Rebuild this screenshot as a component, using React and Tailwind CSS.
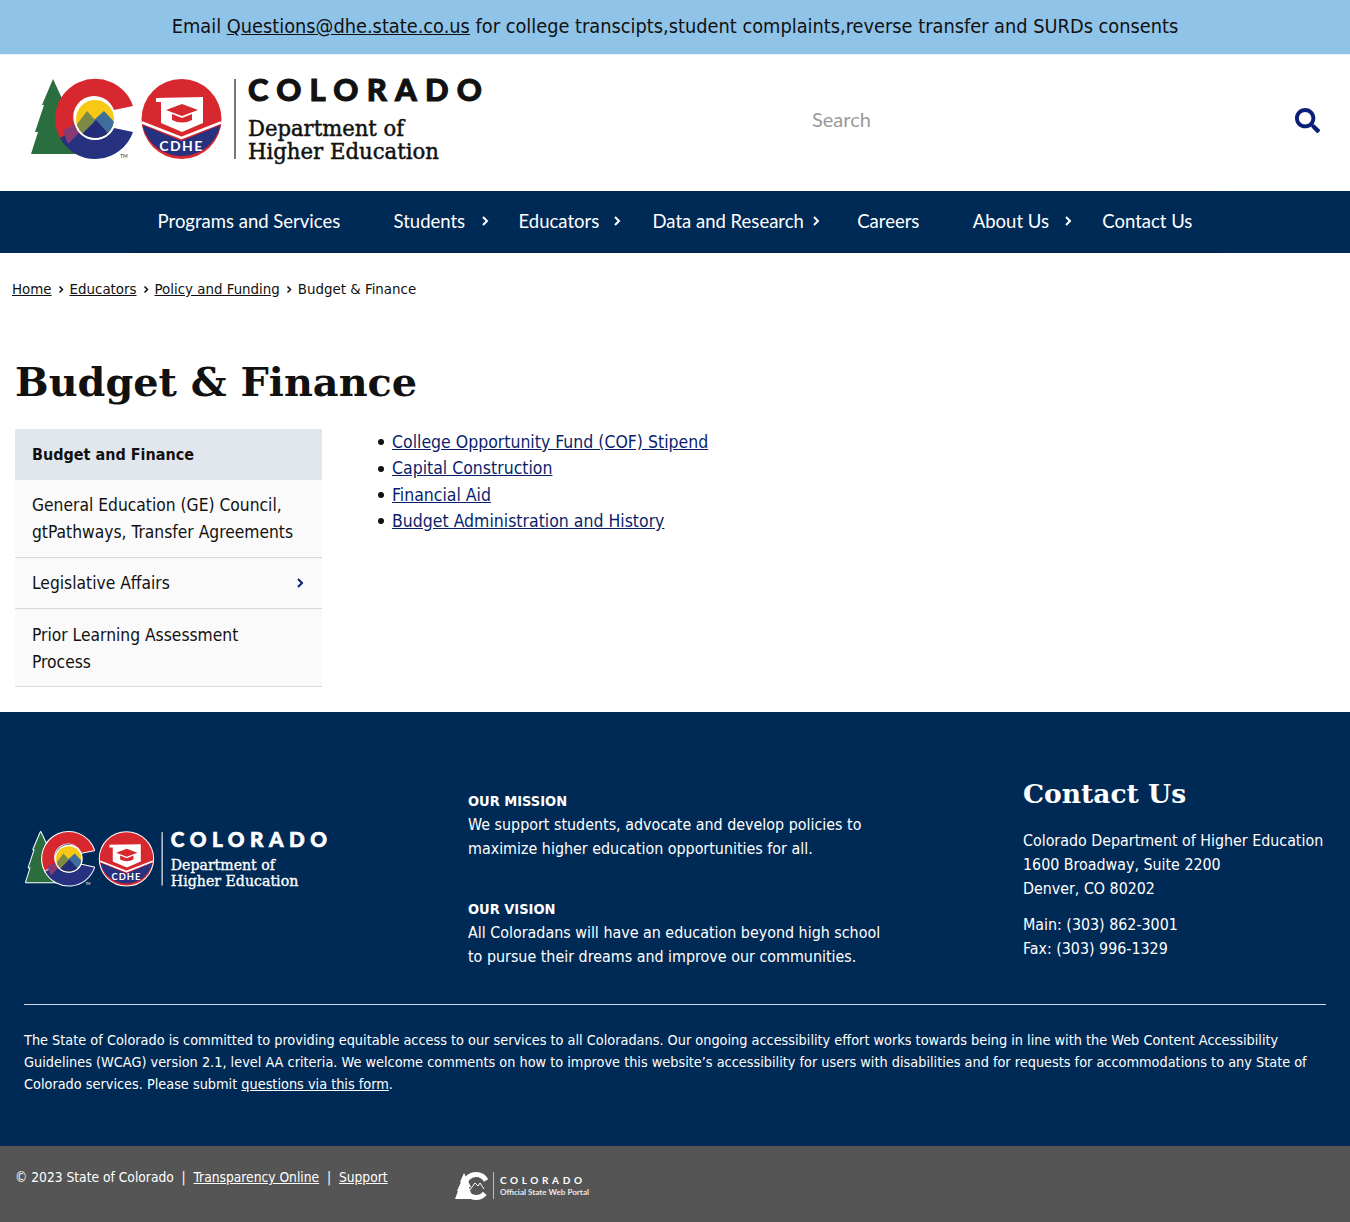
import { FaSearch } from "react-icons/fa";

const navItems = [
  { label: "Programs and Services" },
  { label: "Students", arrow: "right-[3px]" },
  { label: "Educators", arrow: "right-[5px]" },
  { label: "Data and Research", arrow: "right-[11px]" },
  { label: "Careers" },
  { label: "About Us", arrow: "right-[4px]" },
  { label: "Contact Us" },
];

const contentLinks = [
  "College Opportunity Fund (COF) Stipend",
  "Capital Construction",
  "Financial Aid",
  "Budget Administration and History",
];

const Chevron = ({ className }) => (
  <svg viewBox="0 0 8 12" className={className} fill="none" stroke="currentColor" strokeWidth="2">
    <path d="M2 2l4 4-4 4" />
  </svg>
);

// Department logo, drawn in header pixel coordinates
const CdheLogo = ({ dark = false, className }) => {
  const textColor = dark ? "#ffffff" : "#111111";
  const outline = dark ? { stroke: "#ffffff", strokeWidth: 3, strokeLinejoin: "round", paintOrder: "stroke" } : {};
  const clipId = dark ? "ring-dark" : "ring-light";
  return (
    <svg viewBox="28 76 460 88" className={`overflow-visible ${className}`}>
      <defs>
        <clipPath id={clipId}>
          <circle cx="95" cy="119" r="19" />
        </clipPath>
      </defs>
      {/* tree */}
      <polygon
        points="53,79 65,105 63,105 72,132 70,132 78,154 31,154 38,132 35,132 44,105 42,105"
        fill="#2a6e3f"
        {...outline}
      />
      {/* C */}
      <path d="M133 106 A40 40 0 1 0 60 138 L77 129 A21 21 0 1 1 114 110 Z" fill="#d7282f" {...outline} />
      <path d="M60 138 A40 40 0 0 0 133 132 L114 128 A21 21 0 0 1 77 129 Z" fill="#26317f" {...outline} />
      <polygon points="63,130 76,124 80,132 68,144" fill="#8a3a72" />
      <circle cx="95" cy="119" r="21" fill="#ffffff" />
      <g clipPath={`url(#${clipId})`}>
        <rect x="74" y="98" width="42" height="42" fill="#f7c916" />
        <polygon points="74,128 87,111 97,122 88,140 74,140" fill="#7d8a45" />
        <polygon points="94,120 104,111 118,126 110,138 96,138" fill="#3f6e9c" />
        <polygon points="76,140 96,120 114,140" fill="#232c78" />
      </g>
      <text x="120" y="158" fontSize="5" fill={dark ? "#ffffff" : "#333333"} fontFamily="Lato, sans-serif">TM</text>
      {/* CDHE seal */}
      <circle cx="181.5" cy="119" r="40" fill="#d7282f" {...outline} />
      <path d="M142.5 125 L181.5 141 L220.5 125 A40 40 0 0 1 142.5 125 Z" fill="#26317f" />
      <polyline points="142,122.5 181.5,138 221,122.5" fill="none" stroke="#ffffff" strokeWidth="2.5" />
      <polygon points="156,98 203,97 203,123 182,132 161,123 161,102 156,102" fill="#ffffff" />
      <polygon points="182,104 198,110 182,116 166,110" fill="#d7282f" />
      <path d="M172 114 L182 118 L192 114 L192 120 Q182 125 172 120 Z" fill="#d7282f" />
      <text x="181.5" y="151" textAnchor="middle" fontSize="14" fontWeight="700" letterSpacing="1.5" fill="#ffffff" fontFamily="Lato, sans-serif">CDHE</text>
      {/* divider */}
      <rect x="234" y="79" width="2" height="80" fill={dark ? "#d5dbe4" : "#777777"} />
      <text x="248" y="101" fontSize="31" fontWeight="900" stroke={textColor} strokeWidth="1" textLength="234" lengthAdjust="spacing" fill={textColor} fontFamily="Lato, sans-serif">COLORADO</text>
      <text x="248" y="136" fontSize="22" stroke={textColor} strokeWidth="0.5" textLength="156" lengthAdjust="spacingAndGlyphs" fill={textColor} fontFamily="'DejaVu Serif', serif">Department of</text>
      <text x="248" y="159" fontSize="22" stroke={textColor} strokeWidth="0.5" textLength="191" lengthAdjust="spacingAndGlyphs" fill={textColor} fontFamily="'DejaVu Serif', serif">Higher Education</text>
    </svg>
  );
};

// Small white state logo in the copyright bar
const StateLogo = () => (
  <svg viewBox="0 0 136 30" className="w-[136px] h-[30px] mt-[4px] -ml-[1px]">
    <polygon points="10,2 17,16 15,16 19,28 1,28 4,20 3,20 7,11 6,11" fill="#ffffff" />
    <circle cx="22" cy="15" r="11.5" fill="none" stroke="#ffffff" strokeWidth="5" strokeDasharray="58 14" strokeDashoffset="-8" />
    <path d="M15 20 L21 12 L24 15 L26 12 L30 18" fill="none" stroke="#ffffff" strokeWidth="1" />
    <rect x="39" y="1" width="1" height="27" fill="#bbbbbb" />
    <text x="46" y="13" fontSize="10" fontWeight="700" textLength="82" lengthAdjust="spacing" fill="#ffffff" fontFamily="Lato, sans-serif">COLORADO</text>
    <text x="46" y="24" fontSize="8" fontWeight="700" textLength="89" lengthAdjust="spacingAndGlyphs" fill="#e8e8e8" fontFamily="Lato, sans-serif">Official State Web Portal</text>
  </svg>
);

const Separator = () => <Chevron className="inline-block w-[6px] h-[9px] mx-[6px] align-baseline" />;

const App = () => {
  return (
    <div className="font-['DejaVu_Sans_Condensed','DejaVu_Sans',sans-serif] text-black bg-white">
      {/* Notice bar */}
      <div className="h-[54px] bg-[#8fc3e8] flex items-center justify-center text-[19.8px] text-[#111111]">
        <p>
          Email <a href="#" className="underline">Questions@dhe.state.co.us</a> for college transcipts,student complaints,reverse transfer and SURDs consents
        </p>
      </div>

      {/* Header */}
      <header className="h-[137px] flex items-center justify-between pl-[28px] pr-[30px] pb-[6px] border-t border-[#eef3f6]">
        <CdheLogo className="w-[460px] h-[88px]" />
        <div className="flex items-center">
          <span className="w-[483px] mb-[3px] text-[20px] text-[#9a9a9a] font-['Lato',sans-serif]">Search</span>
          <FaSearch className="w-[25px] h-[25px] text-[#0a1f78]" />
        </div>
      </header>

      {/* Main nav */}
      <nav className="h-[62px] bg-[#002a56] flex justify-center font-['Lato',sans-serif]">
        <div className="w-[1090px] flex justify-center items-center border-y border-[#00234a]">
          {navItems.map((item) => (
            <a key={item.label} href="#" className="relative px-[26.7px] text-[18.5px] text-white whitespace-nowrap">
              {item.label}
              {item.arrow && <Chevron className={`absolute top-[7px] w-[8px] h-[12px] text-white ${item.arrow}`} />}
            </a>
          ))}
        </div>
      </nav>

      {/* Breadcrumb */}
      <div className="pl-[12px] pt-[25px] text-[14.9px] leading-[22px] text-[#111111]">
        <a href="#" className="underline">Home</a>
        <Separator />
        <a href="#" className="underline">Educators</a>
        <Separator />
        <a href="#" className="underline">Policy and Funding</a>
        <Separator />
        <span>Budget &amp; Finance</span>
      </div>

      <h1 className="pl-[15px] mt-[54px] text-[39.8px] leading-[56px] font-bold font-['DejaVu_Serif',serif] text-[#111111]">
        Budget &amp; Finance
      </h1>

      {/* Sidebar and links */}
      <div className="flex mt-[19px] pl-[15px] pb-[25px]">
        <aside className="w-[307px] text-[17.3px] leading-[27px] text-[#111111]">
          <div className="h-[51px] bg-[#e2e7ee] flex items-center px-[17px] text-[16px] font-bold">Budget and Finance</div>
          <div className="bg-[#fafafa] border-b border-[#d9d9d9] px-[17px] pt-[12px] pb-[11px]">
            General Education (GE) Council, gtPathways, Transfer Agreements
          </div>
          <div className="h-[51px] bg-[#fafafa] border-b border-[#d9d9d9] px-[17px] flex items-center justify-between">
            <span>Legislative Affairs</span>
            <Chevron className="w-[8px] h-[12px] mr-[1px] text-[#0a1f78]" />
          </div>
          <div className="bg-[#fafafa] border-b border-[#d9d9d9] px-[17px] pt-[13px] pb-[10px] pr-[60px]">
            Prior Learning Assessment Process
          </div>
        </aside>
        <ul className="ml-[56px] text-[17.5px] leading-[26.4px]">
          {contentLinks.map((link) => (
            <li key={link} className="flex items-center gap-[8px]">
              <span className="w-[6px] h-[6px] rounded-full bg-[#111111]" />
              <a href="#" className="underline text-[#0a1f6b]">{link}</a>
            </li>
          ))}
        </ul>
      </div>

      {/* Footer */}
      <footer className="bg-[#002a56] text-white">
        <div className="px-[24px]">
          <div className="h-[293px] flex border-b border-[#d5dbe4]">
            <div className="w-[444px] shrink-0 pt-[118px]">
              <CdheLogo dark className="w-[307px] h-[59px]" />
            </div>
            <div className="w-[555px] shrink-0 pt-[77px] text-[15.9px] leading-[24px]">
              <p className="font-bold text-[14.5px]">OUR MISSION</p>
              <p className="w-[420px]">We support students, advocate and develop policies to maximize higher education opportunities for all.</p>
              <p className="font-bold text-[14.5px] mt-[36px]">OUR VISION</p>
              <p className="w-[420px]">All Coloradans will have an education beyond high school to pursue their dreams and improve our communities.</p>
            </div>
            <div className="pt-[62px] text-[15.85px] leading-[24px] whitespace-nowrap">
              <h2 className="font-bold font-['DejaVu_Serif',serif] text-[26.5px] leading-[40px] mb-[15px]">Contact Us</h2>
              <p>Colorado Department of Higher Education</p>
              <p>1600 Broadway, Suite 2200</p>
              <p>Denver, CO 80202</p>
              <p className="mt-[12px]">Main: (303) 862-3001</p>
              <p>Fax: (303) 996-1329</p>
            </div>
          </div>
          <p className="pt-[24px] pb-[51px] text-[14.35px] leading-[22px]">
            The State of Colorado is committed to providing equitable access to our services to all Coloradans. Our ongoing accessibility effort works towards being in line with the Web Content Accessibility Guidelines (WCAG) version 2.1, level AA criteria. We welcome comments on how to improve this website’s accessibility for users with disabilities and for requests for accommodations to any State of Colorado services. Please submit <a href="#" className="underline">questions via this form</a>.
          </p>
        </div>

        {/* Copyright bar */}
        <div className="h-[76px] bg-[#555555] flex items-start pl-[15px] pt-[21px] text-[13.7px] leading-[20px]">
          <p className="w-[440px]">
            © 2023 State of Colorado&nbsp; |&nbsp; <a href="#" className="underline">Transparency Online</a>&nbsp; |&nbsp; <a href="#" className="underline">Support</a>
          </p>
          <StateLogo />
        </div>
      </footer>
    </div>
  );
};

export default App;
